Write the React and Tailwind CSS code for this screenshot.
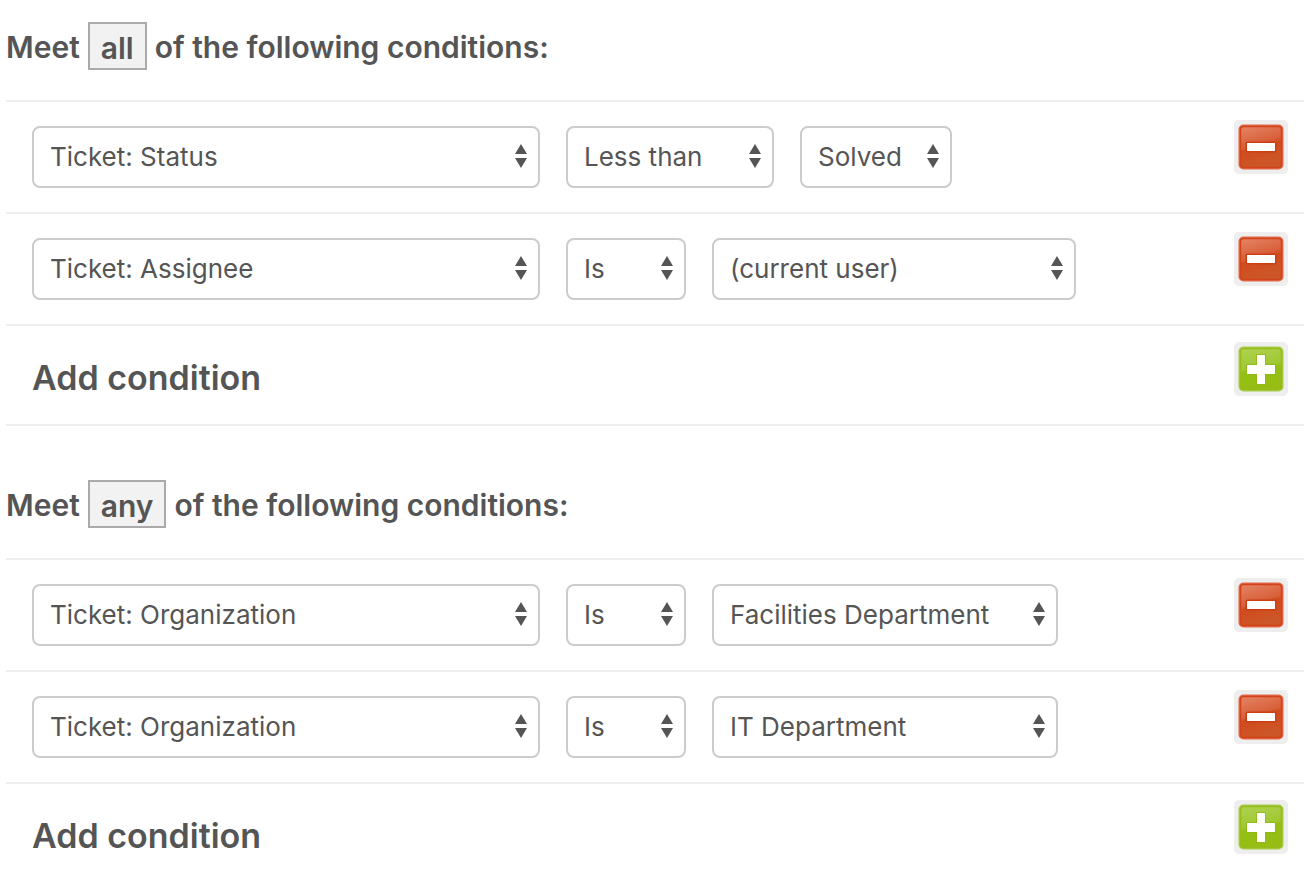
import { useState } from "react";

const GROUPS = [
  {
    id: "all",
    rows: [
      [
        { label: "Field", value: "Ticket: Status", width: "w-[508px]" },
        { label: "Operator", value: "Less than", width: "w-[208px]" },
        { label: "Value", value: "Solved", width: "w-[152px]" },
      ],
      [
        { label: "Field", value: "Ticket: Assignee", width: "w-[508px]" },
        { label: "Operator", value: "Is", width: "w-[120px]" },
        { label: "Value", value: "(current user)", width: "w-[364px]" },
      ],
    ],
  },
  {
    id: "any",
    rows: [
      [
        { label: "Field", value: "Ticket: Organization", width: "w-[508px]" },
        { label: "Operator", value: "Is", width: "w-[120px]" },
        { label: "Value", value: "Facilities Department", width: "w-[346px]" },
      ],
      [
        { label: "Field", value: "Ticket: Organization", width: "w-[508px]" },
        { label: "Operator", value: "Is", width: "w-[120px]" },
        { label: "Value", value: "IT Department", width: "w-[346px]" },
      ],
    ],
  },
];

const OPTIONS = {
  Field: ["Ticket: Status", "Ticket: Assignee", "Ticket: Organization"],
  Operator: ["Is", "Is not", "Less than", "Greater than"],
};

function Select({ label, value, width }) {
  const [current, setCurrent] = useState(value);
  const options = OPTIONS[label] || [value];

  return (
    <div className={`relative ${width}`}>
      <select
        aria-label={label}
        value={current}
        onChange={(e) => setCurrent(e.target.value)}
        className="block w-full h-[62px] appearance-none rounded-lg border-2 border-[#cccccc] bg-white pl-4 pr-8 pb-0.5 text-[26px] text-[#555555]"
      >
        {options.map((o) => (
          <option key={o}>{o}</option>
        ))}
      </select>
      <svg
        width="12"
        height="24"
        viewBox="0 0 12 24"
        fill="#555555"
        className="absolute right-[13px] top-[18px] pointer-events-none"
      >
        <path d="M6 0l6 10H0z" />
        <path d="M0 14h12L6 24z" />
      </svg>
    </div>
  );
}

function RemoveIcon() {
  return (
    <svg width="54" height="54" viewBox="0 0 54 54">
      <defs>
        <linearGradient id="remove-fill" x1="0" y1="0" x2="0.3" y2="1">
          <stop offset="0" stopColor="#e48565" />
          <stop offset="0.5" stopColor="#d8603a" />
          <stop offset="0.58" stopColor="#d04c1e" />
          <stop offset="1" stopColor="#cc5628" />
        </linearGradient>
      </defs>
      <rect width="54" height="54" rx="5" fill="#eeeeee" />
      <rect x="4.5" y="4.5" width="45" height="45" rx="5" fill="#e2694a" />
      <rect x="6.5" y="6.5" width="41" height="41" rx="3" fill="url(#remove-fill)" stroke="#d2431a" strokeWidth="1.5" />
      <rect x="11.5" y="21.5" width="31" height="11" rx="2" fill="#cb3d12" />
      <rect x="13" y="23" width="28" height="8" fill="#ffffff" />
    </svg>
  );
}

function AddIcon() {
  return (
    <svg width="54" height="54" viewBox="0 0 54 54">
      <defs>
        <linearGradient id="add-fill" x1="0" y1="0" x2="0.2" y2="1">
          <stop offset="0" stopColor="#b0d250" />
          <stop offset="0.5" stopColor="#a0c832" />
          <stop offset="0.58" stopColor="#94c012" />
          <stop offset="1" stopColor="#97bd14" />
        </linearGradient>
      </defs>
      <rect width="54" height="54" rx="5" fill="#eeeeee" />
      <rect x="4.5" y="4.5" width="45" height="45" rx="5" fill="#a9cc48" />
      <rect x="6.5" y="6.5" width="41" height="41" rx="3" fill="url(#add-fill)" stroke="#95bd1c" strokeWidth="1.5" />
      <path
        d="M23 13h8v10h10v9H31v10h-8V32H13v-9h10z"
        fill="#ffffff"
        stroke="#8fb51a"
        strokeWidth="1.5"
        paintOrder="stroke"
      />
    </svg>
  );
}

function ConditionGroup({ id, rows }) {
  return (
    <section>
      <h2 className="flex items-center gap-2 pb-[30px] text-[30px] leading-[44px] font-semibold">
        <span className="pt-0.5">Meet</span>
        <span className="border-2 border-[#aaaaaa] bg-[#f2f2f2] px-[11px] pt-1 leading-10">{id}</span>
        <span className="pt-0.5">of the following conditions:</span>
      </h2>

      {rows.map((row, i) => (
        <div key={i} className="flex items-start justify-between border-t-2 border-[#eeeeee] pl-[26px] pr-4">
          <div className="flex gap-[26px] py-6">
            {row.map((field) => (
              <Select key={field.label} {...field} />
            ))}
          </div>
          <button type="button" aria-label="Remove condition" className="mt-[18px]">
            <RemoveIcon />
          </button>
        </div>
      ))}

      <div className="flex items-start justify-between border-y-2 border-[#eeeeee] pl-[26px] pr-4 pt-4 pb-[26px]">
        <h3 className="pt-4 text-[34px] leading-10 font-semibold">Add condition</h3>
        <button type="button" aria-label="Add condition">
          <AddIcon />
        </button>
      </div>
    </section>
  );
}

export default function App() {
  return (
    <main className="min-h-screen bg-white pl-[6px] pr-2 pt-[22px] font-[Inter,sans-serif] text-[#555555]">
      <div className="flex flex-col gap-[54px]">
        {GROUPS.map((group) => (
          <ConditionGroup key={group.id} {...group} />
        ))}
      </div>
    </main>
  );
}
